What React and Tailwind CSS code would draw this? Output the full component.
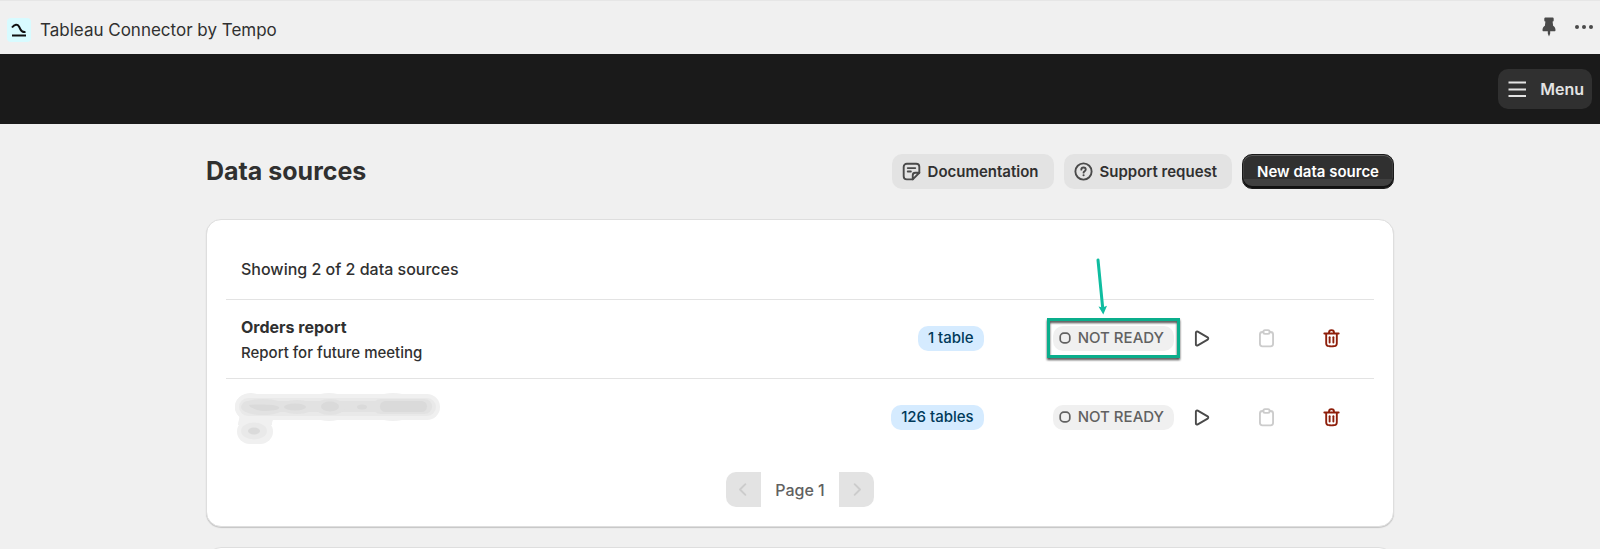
import React from "react";

function Icon({ children }) {
  return (
    <svg
      viewBox="0 0 20 20"
      aria-hidden="true"
      fill="none"
      stroke="currentColor"
      strokeWidth="1.5"
      strokeLinecap="round"
      strokeLinejoin="round"
      className="size-[25px] shrink-0"
    >
      {children}
    </svg>
  );
}

function PlayIcon() {
  return (
    <Icon>
      <path d="M5.5 5.3v9.4c0 .85.85 1.1 1.5.8l7.9-4.6c.7-.45.7-1.35 0-1.8L7 4.5c-.65-.3-1.5-.05-1.5.8Z" />
    </Icon>
  );
}

function ClipboardIcon() {
  return (
    <Icon>
      <path d="M7.5 4.75h-.75a2 2 0 0 0-2 2v7.5a2 2 0 0 0 2 2h6.5a2 2 0 0 0 2-2v-7.5a2 2 0 0 0-2-2h-.75" />
      <rect x="7.5" y="3.25" width="5" height="3" rx="1.25" />
    </Icon>
  );
}

function DeleteIcon() {
  return (
    <svg viewBox="0 0 20 20" aria-hidden="true" fill="currentColor" className="size-[25px] shrink-0">
      <path d="M11.5 8.25a.75.75 0 0 1 .75.75v4.25a.75.75 0 0 1-1.5 0v-4.25a.75.75 0 0 1 .75-.75Z" />
      <path d="M9.25 9a.75.75 0 0 0-1.5 0v4.25a.75.75 0 0 0 1.5 0v-4.25Z" />
      <path
        fillRule="evenodd"
        d="M7.25 5.25a2.75 2.75 0 0 1 5.5 0h3a.75.75 0 0 1 0 1.5h-.75v5.45c0 1.68 0 2.52-.327 3.162a3 3 0 0 1-1.311 1.311c-.642.327-1.482.327-3.162.327h-.4c-1.68 0-2.52 0-3.162-.327a3 3 0 0 1-1.311-1.311c-.327-.642-.327-1.482-.327-3.162v-5.45h-.75a.75.75 0 0 1 0-1.5h3Zm1.5 0a1.25 1.25 0 1 1 2.5 0h-2.5Zm-2.25 1.5h7v5.45c0 .865-.001 1.423-.036 1.848-.033.408-.09.559-.128.633a1.5 1.5 0 0 1-.655.655c-.074.038-.225.095-.633.128-.425.035-.983.036-1.848.036h-.4c-.865 0-1.423-.001-1.848-.036-.408-.033-.559-.09-.633-.128a1.5 1.5 0 0 1-.656-.655c-.037-.074-.094-.225-.127-.633-.035-.425-.036-.983-.036-1.848v-5.45Z"
      />
    </svg>
  );
}

function NoteIcon() {
  return (
    <Icon>
      <path d="M16.25 11V6.25a2.5 2.5 0 0 0-2.5-2.5h-7.5a2.5 2.5 0 0 0-2.5 2.5v7.5a2.5 2.5 0 0 0 2.5 2.5H11" />
      <path d="M16.25 11 11 16.25V13a2 2 0 0 1 2-2Z" />
      <path d="M7 7.25h6M7 10h2.5" />
    </Icon>
  );
}

function QuestionIcon() {
  return (
    <Icon>
      <circle cx="10" cy="10" r="6.5" />
      <path d="M8.25 8.5c0-1 .8-1.7 1.8-1.7s1.75.7 1.75 1.6c0 1.3-1.75 1.35-1.75 2.5" />
      <circle cx="10.05" cy="13" r=".4" strokeWidth=".9" fill="currentColor" />
    </Icon>
  );
}

function PinIcon() {
  return (
    <svg viewBox="0 0 14 20" aria-hidden="true" fill="currentColor" className="h-5 w-3.5">
      <path d="M3.5.5h7c.9 0 1.2.6 1.2 1.3v1.4c0 .8-.4 1.2-1.1 1.4l.5 4.2c1.5.9 2.4 2.4 2.4 4.2 0 .9-.3 1.3-1 1.3H8.2v2.2L7 19.5l-1.2-3v-2.2H1.5c-.7 0-1-.4-1-1.3 0-1.8.9-3.3 2.4-4.2l.5-4.2c-.7-.2-1.1-.6-1.1-1.4V1.8C2.3 1.1 2.6.5 3.5.5Z" />
    </svg>
  );
}

function StatusBadge({ children }) {
  return (
    <span className="flex h-[25px] items-center gap-[7px] rounded-[10px] bg-[#f0f0f0] pr-2.5 pl-1.5 text-[15px] font-medium text-[#616161]">
      <svg viewBox="0 0 12 12" aria-hidden="true" className="size-3">
        <rect x="1.2" y="1.2" width="9.6" height="9.6" rx="3.6" fill="none" stroke="currentColor" strokeWidth="1.7" />
      </svg>
      {children}
    </span>
  );
}

function Callout() {
  return (
    <>
      <span className="absolute -inset-x-1.5 -top-2 -bottom-[7px] border-3 border-[#0aae8c] drop-shadow-[0_2px_1px_rgba(0,0,0,0.7)]" />
      <svg viewBox="0 0 14 60" aria-hidden="true" className="absolute -top-[69px] left-[41px] h-[60px] w-3.5">
        <path d="M4 3 8.6 50" stroke="#0fbda0" strokeWidth="3" strokeLinecap="round" />
        <path d="M4.5 49.5 8.5 50.5 13 48.7 9.3 57.5Z" fill="#0fbda0" />
      </svg>
    </>
  );
}

function RedactedName() {
  return (
    <svg viewBox="0 0 206 52" role="img" aria-label="Hidden name" className="-ml-1.5 h-[52px] w-[206px]">
      <g fill="#f0f0f0">
        <rect x="0" y="1" width="205" height="26" rx="13" />
        <ellipse cx="16" cy="14" rx="16" ry="14" />
        <ellipse cx="94" cy="14" rx="22" ry="14" />
        <ellipse cx="158" cy="14" rx="24" ry="14" />
        <rect x="2" y="26" width="36" height="25" rx="12.5" />
        <path d="M4 22h38c-3 3-5 5-5 10H3c0-4 2-5 1-10Z" />
      </g>
      <g fill="#e9e9e9">
        <rect x="4" y="5" width="197" height="18" rx="9" />
        <ellipse cx="19" cy="38" rx="13" ry="8.5" />
      </g>
      <g fill="#e2e2e2">
        <rect x="7" y="8" width="190" height="11" rx="5.5" />
        <ellipse cx="28" cy="14" rx="22" ry="8" />
        <ellipse cx="62" cy="14" rx="17" ry="7" />
        <ellipse cx="95" cy="14" rx="15" ry="8" />
        <rect x="138" y="6" width="59" height="15" rx="7.5" />
      </g>
      <g fill="#dadada">
        <path d="M14 12c8-1 28-1 30 2s-8 4-14 4-15-3-16-6Z" />
        <ellipse cx="60" cy="14" rx="11" ry="3.5" />
        <ellipse cx="95" cy="13.5" rx="9" ry="5" />
        <ellipse cx="127" cy="14" rx="5" ry="2.5" />
        <rect x="145" y="8" width="47" height="11" rx="5.5" />
        <ellipse cx="19" cy="38" rx="6" ry="3.5" />
      </g>
    </svg>
  );
}

function SourceRow({ tables, highlighted, children }) {
  return (
    <li className="flex h-[79px] items-center border-t border-[#e3e3e3] pr-[30px] pb-0.5 pl-[15px]">
      <div className="flex-1 pt-1">{children}</div>
      <span className="mr-[69px] flex h-[25px] items-center rounded-[10px] bg-[#d5ebff] px-2.5 text-[15px] font-medium text-[#003a5a]">
        {tables}
      </span>
      <div className="relative mr-[15px]">
        <StatusBadge>NOT READY</StatusBadge>
        {highlighted && <Callout />}
      </div>
      <div className="flex gap-10">
        <button type="button" aria-label="Run" className="text-[#4a4a4a]">
          <PlayIcon />
        </button>
        <button type="button" aria-label="Copy" disabled className="text-[#cccccc]">
          <ClipboardIcon />
        </button>
        <button type="button" aria-label="Delete" className="text-[#8e1f0b]">
          <DeleteIcon />
        </button>
      </div>
    </li>
  );
}

function SecondaryLink({ href, icon, children }) {
  return (
    <a
      href={href}
      className="flex h-[35px] items-center gap-1 rounded-[10px] bg-[#e3e3e3] pr-[15px] pl-[7px] text-[15px] leading-6 font-semibold text-[#303030]"
    >
      <span className="text-[#4a4a4a]">{icon}</span>
      {children}
    </a>
  );
}

export default function App() {
  return (
    <div className="flex h-screen flex-col overflow-hidden bg-[#f0f0f0] font-['Inter',sans-serif] text-[#303030]">
      <header className="flex h-[54px] shrink-0 items-center border-t border-[#e6e6e6] pt-1 pr-1.5 pl-[7px]">
        <svg viewBox="0 0 24 24" aria-hidden="true" className="size-6">
          <rect width="24" height="24" rx="4" fill="#d8fbff" />
          <path
            d="M5 9.5C7.5 6.2 10.5 6 12 8.5L13.5 11.5C14.5 13.6 16 14.3 18.5 14M5 17.5h14"
            fill="none"
            stroke="#101010"
            strokeWidth="2"
          />
        </svg>
        <span className="ml-[9px] flex-1 text-[17px] leading-6">Tableau Connector by Tempo</span>
        <div className="flex items-center gap-[18px] pb-1.5 text-[#4a4a4a]">
          <button type="button" aria-label="Pin">
            <PinIcon />
          </button>
          <button type="button" aria-label="More">
            <svg viewBox="0 0 20 6" aria-hidden="true" fill="currentColor" className="h-1.5 w-5">
              <circle cx="3" cy="3" r="2" />
              <circle cx="10" cy="3" r="2" />
              <circle cx="17" cy="3" r="2" />
            </svg>
          </button>
        </div>
      </header>

      <nav className="flex h-[70px] shrink-0 items-center justify-end bg-[#1a1a1a] px-2">
        <button
          type="button"
          className="flex h-10 items-center gap-3 rounded-[10px] bg-[#303030] px-2 text-[16px] leading-6 font-semibold text-[#e3e3e3]"
        >
          <svg viewBox="0 0 22 20" aria-hidden="true" className="h-5 w-[22px]">
            <path d="M2.5 3.5h17.5M2.5 10.5h17.5M2.5 17h17.5" stroke="currentColor" strokeWidth="1.8" />
          </svg>
          Menu
        </button>
      </nav>

      <main className="mx-auto w-full max-w-[1188px] pt-[30px]">
        <div className="flex items-center gap-2.5">
          <h1 className="flex-1 text-[25px] leading-[35px] font-bold">Data sources</h1>
          <SecondaryLink href="#documentation" icon={<NoteIcon />}>
            Documentation
          </SecondaryLink>
          <SecondaryLink href="#support" icon={<QuestionIcon />}>
            Support request
          </SecondaryLink>
          <button
            type="button"
            className="h-[35px] rounded-[10px] border border-[#1a1a1a] bg-[linear-gradient(#303030_74%,#404040_74%)] px-3.5 text-[15px] leading-6 font-semibold text-white shadow-[inset_0_-2px_0_#111,inset_0_1px_0_#5a5a5a,inset_1px_0_0_#404040,inset_-1px_0_0_#404040]"
          >
            New data source
          </button>
        </div>

        <section className="mt-[30px] rounded-[15px] border border-[#dedede] bg-white px-[19px] pb-[19px] shadow-[0_1px_1px_#c4c4c4]">
          <p className="px-[15px] pt-[37px] pb-[18px] text-[16px] leading-6 font-medium">Showing 2 of 2 data sources</p>
          <ul>
            <SourceRow tables="1 table" highlighted>
              <h2 className="text-[16px] leading-[25px] font-bold">Orders report</h2>
              <p className="text-[15px] leading-[25px] font-medium">Report for future meeting</p>
            </SourceRow>
            <SourceRow tables="126 tables">
              <RedactedName />
            </SourceRow>
          </ul>
          <div className="mt-[15px] flex items-center justify-center">
            <button type="button" aria-label="Previous page" disabled className="flex size-[35px] items-center justify-center rounded-l-[10px] bg-[#e3e3e3] text-[#cccccc]">
              <Icon>
                <path d="m11.5 5.7-4.3 4.3 4.3 4.3" />
              </Icon>
            </button>
            <span className="px-3.5 text-[16px] font-medium text-[#616161]">Page 1</span>
            <button type="button" aria-label="Next page" disabled className="flex size-[35px] items-center justify-center rounded-r-[10px] bg-[#e3e3e3] text-[#cccccc]">
              <Icon>
                <path d="m8.5 5.7 4.3 4.3-4.3 4.3" />
              </Icon>
            </button>
          </div>
        </section>

        <section className="mt-5 h-20 rounded-[15px] border border-[#dedede] bg-white" />
      </main>
    </div>
  );
}
